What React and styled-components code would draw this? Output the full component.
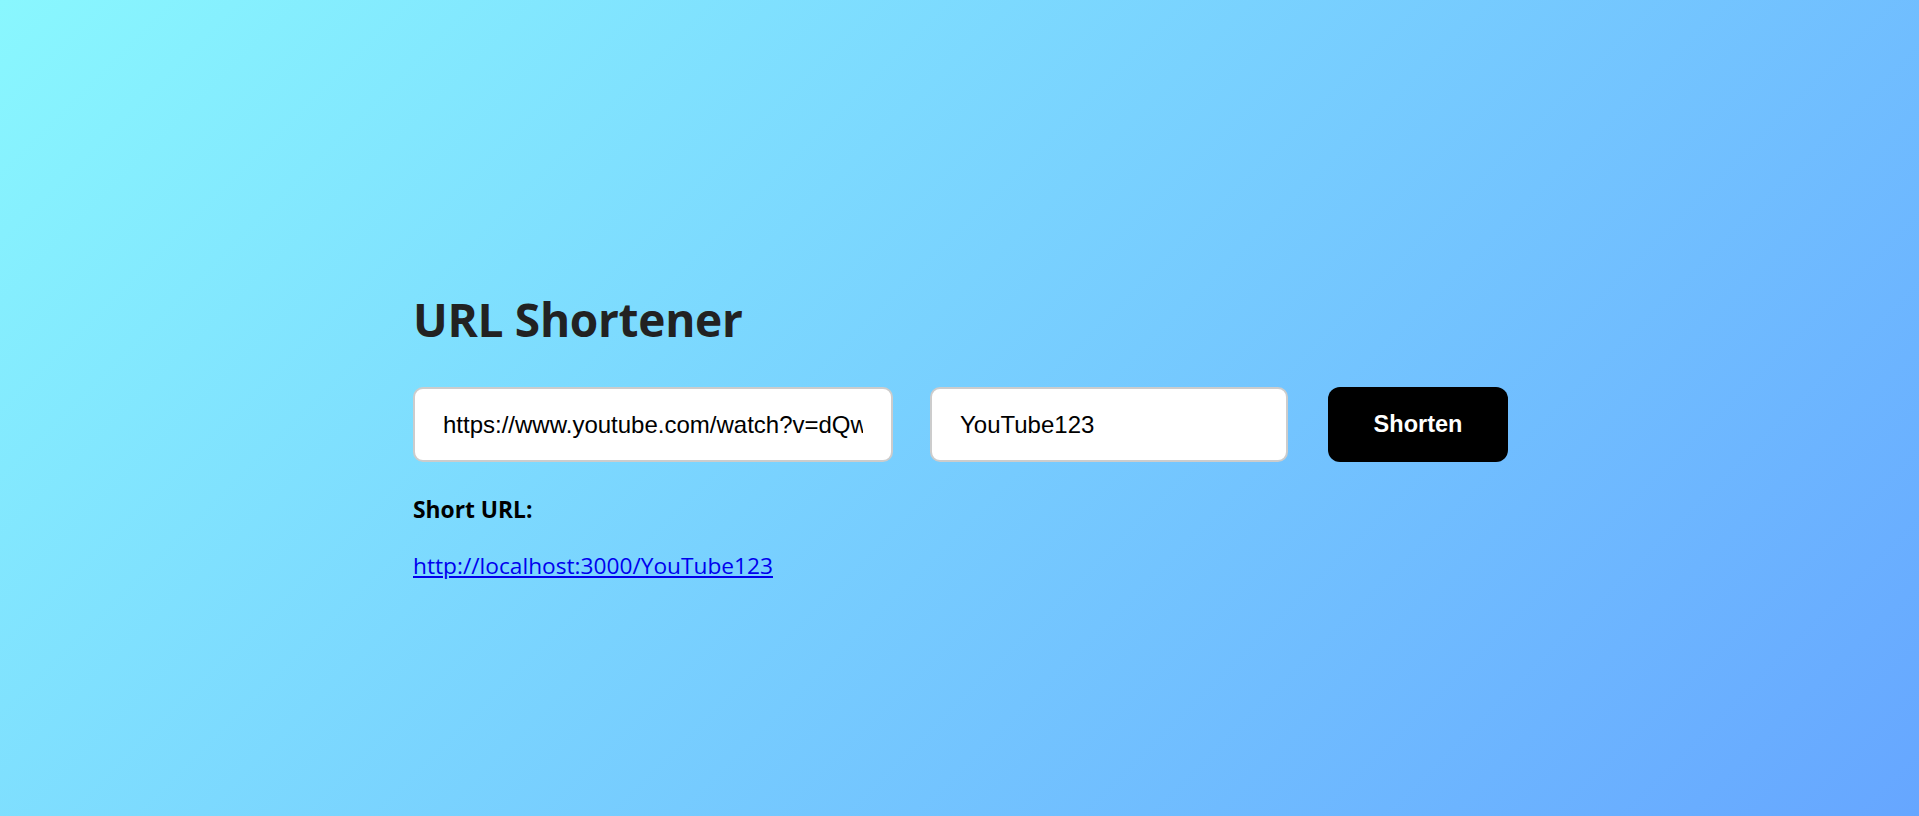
import React, { useState } from "react";
import styled, { createGlobalStyle } from "styled-components";

const GlobalStyle = createGlobalStyle`
  html, body {
    margin: 0;
    padding: 0;
  }
  body {
    min-height: 100vh;
    background: linear-gradient(135deg, #89f7fe 0%, #66a6ff 100%);
    background-attachment: fixed;
    font-family: "Open Sans", "Noto Sans", sans-serif;
  }
  * { box-sizing: border-box; }
`;

const Page = styled.main`
  min-height: 100vh;
  padding-top: 288px;
`;

const Container = styled.section`
  width: 1093px;
  margin: 0 auto;
  display: flex;
  flex-direction: column;
  align-items: flex-start;
`;

const Title = styled.h1`
  margin: 0;
  font-family: "Open Sans", "Noto Sans", sans-serif;
  font-size: 46px;
  font-weight: 700;
  color: #222222;
  letter-spacing: -0.3px;
`;

const Form = styled.form`
  display: flex;
  align-items: center;
  gap: 37px;
  margin-top: 37px;
`;

const Input = styled.input`
  width: ${(p) => p.$width}px;
  height: 75px;
  padding: 0 28px;
  border: 2px solid #cccccc;
  border-radius: 10px;
  background: #ffffff;
  font-family: "Liberation Sans", Arial, sans-serif;
  font-size: 24px;
  color: #000000;
  outline: none;
`;

const Button = styled.button`
  width: 180px;
  height: 75px;
  margin-left: 3px;
  border: none;
  border-radius: 12px;
  background: #000000;
  color: #ffffff;
  font-family: "Liberation Sans", Arial, sans-serif;
  font-size: 23.5px;
  font-weight: 700;
  cursor: pointer;
`;

const Label = styled.p`
  margin: 33px 0 0;
  font-size: 22.8px;
  font-weight: 700;
  line-height: 30px;
  color: #000000;
`;

const ShortLink = styled.a`
  margin-top: 26px;
  font-size: 22.7px;
  line-height: 30px;
  color: #0000ee;
  text-decoration: underline;
`;

export default function App() {
  const [url, setUrl] = useState("https://www.youtube.com/watch?v=dQw4w9WgXcQ");
  const [alias, setAlias] = useState("YouTube123");
  return (
    <>
      <GlobalStyle />
      <Page>
        <Container>
          <Title>URL Shortener</Title>
          <Form onSubmit={(e) => e.preventDefault()}>
            <Input $width={480} value={url} onChange={(e) => setUrl(e.target.value)} />
            <Input $width={358} value={alias} onChange={(e) => setAlias(e.target.value)} />
            <Button type="submit">Shorten</Button>
          </Form>
          <Label>Short URL:</Label>
          <ShortLink href="http://localhost:3000/YouTube123">
            http://localhost:3000/YouTube123
          </ShortLink>
        </Container>
      </Page>
    </>
  );
}
